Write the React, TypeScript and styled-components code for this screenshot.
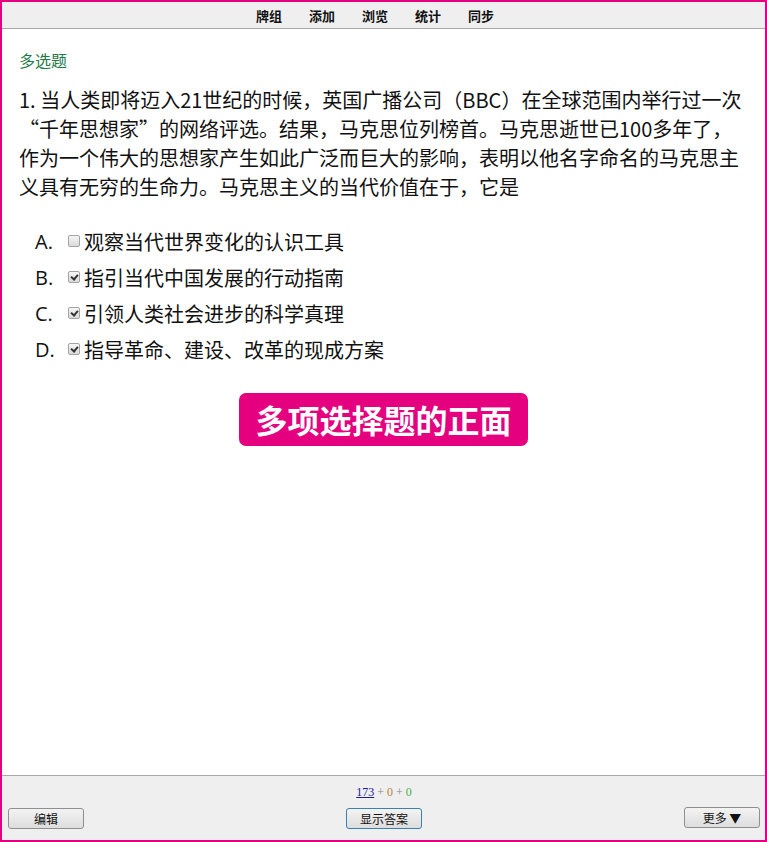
import React from "react";
import styled, { createGlobalStyle } from "styled-components";

const GlobalStyle = createGlobalStyle`
  html, body {
    margin: 0;
    padding: 0;
    background: #ffffff;
  }
  * {
    box-sizing: border-box;
  }
`;

const Frame = styled.div`
  height: 842px;
  border: 2px solid #e4007f;
  display: flex;
  flex-direction: column;
  font-family: "Noto Sans CJK SC", "Noto Sans", sans-serif;
  color: #000;
`;

const TopBar = styled.nav`
  height: 27px;
  background: #efefef;
  border-bottom: 1px solid #a8a8a8;
  display: flex;
  justify-content: center;
  align-items: center;
  gap: 27px;
  padding-right: 17px;
`;

const TopLink = styled.a`
  font-size: 13px;
  font-weight: bold;
  color: #111;
  text-decoration: none;
  cursor: pointer;
`;

const Content = styled.main`
  flex: 1;
  padding: 20px 4px 0 17px;
`;

const NoteType = styled.a`
  display: block;
  font-size: 16px;
  line-height: 22px;
  color: #1e7a4a;
  text-decoration: none;
`;

const Question = styled.p`
  margin: 14px 0 0 0;
  font-size: 20px;
  line-height: 29px;
  color: #111;
`;

const Options = styled.ol`
  list-style: none;
  margin: 22px 0 0 0;
  padding: 0 0 0 16px;
`;

const OptionRow = styled.li`
  height: 36px;
  display: flex;
  align-items: center;
  font-size: 20px;
  color: #111;
`;

const Letter = styled.span`
  width: 33px;
  font-family: "Open Sans", "Noto Sans", sans-serif;
`;

const Box = styled.input`
  appearance: none;
  -webkit-appearance: none;
  width: 12px;
  height: 12px;
  margin: 0 4px 0 0;
  border: 1px solid #a3a3a3;
  border-radius: 2px;
  background: linear-gradient(#f6f6f6, #dadada);
  position: relative;

  &:checked::after {
    content: "";
    position: absolute;
    left: 3px;
    top: 1px;
    width: 3px;
    height: 5px;
    border: solid #333;
    border-width: 0 2px 2px 0;
    transform: rotate(40deg);
  }
`;

const Caption = styled.div`
  display: flex;
  justify-content: center;
  margin-top: 26px;
  padding-right: 13px;
`;

const CaptionBadge = styled.span`
  display: inline-block;
  background: #e4007f;
  color: #fff;
  font-size: 32px;
  font-weight: bold;
  line-height: 53px;
  padding: 0 16px;
  border-radius: 7px;
`;

const BottomBar = styled.footer`
  height: 65px;
  background: #efefef;
  border-top: 1px solid #a8a8a8;
  display: grid;
  grid-template-columns: 1fr auto 1fr;
  grid-template-rows: 22px 22px;
  padding: 5px 5px 0 6px;
  row-gap: 3px;
  align-items: center;
`;

const Stats = styled.div`
  grid-column: 2;
  grid-row: 1;
  text-align: center;
  font-family: "Liberation Serif", serif;
  font-size: 12px;
  color: #888;
`;

const StatNum = styled.span<{ $tone: "due" | "learn" | "new" }>`
  color: ${(p) =>
    p.$tone === "due" ? "#1a1a9a" : p.$tone === "learn" ? "#c0803a" : "#4caf4c"};
  text-decoration: ${(p) => (p.$tone === "due" ? "underline" : "none")};
`;

const Button = styled.button<{ $focus?: boolean }>`
  width: 76px;
  height: 21px;
  padding: 0;
  font-family: "Noto Sans CJK SC", sans-serif;
  font-size: 12px;
  color: #111;
  border: 1px solid ${(p) => (p.$focus ? "#3c7fb1" : "#8f8f8f")};
  border-radius: 3px;
  background: linear-gradient(#f3f3f3, #dddddd);
  cursor: pointer;
`;

const LeftCell = styled.div`
  grid-column: 1;
  grid-row: 2;
`;

const CenterCell = styled.div`
  grid-column: 2;
  grid-row: 2;
`;

const RightCell = styled.div`
  grid-column: 3;
  grid-row: 2;
  display: flex;
  justify-content: flex-end;
`;

const questionLines = [
  "1. 当人类即将迈入21世纪的时候，英国广播公司（BBC）在全球范围内举行过一次",
  "“千年思想家”的网络评选。结果，马克思位列榜首。马克思逝世已100多年了，",
  "作为一个伟大的思想家产生如此广泛而巨大的影响，表明以他名字命名的马克思主",
  "义具有无穷的生命力。马克思主义的当代价值在于，它是",
];

const options = [
  { letter: "A.", text: "观察当代世界变化的认识工具", checked: false },
  { letter: "B.", text: "指引当代中国发展的行动指南", checked: true },
  { letter: "C.", text: "引领人类社会进步的科学真理", checked: true },
  { letter: "D.", text: "指导革命、建设、改革的现成方案", checked: true },
];

export default function App() {
  return (
    <>
      <GlobalStyle />
      <Frame>
        <TopBar>
          <TopLink>牌组</TopLink>
          <TopLink>添加</TopLink>
          <TopLink>浏览</TopLink>
          <TopLink>统计</TopLink>
          <TopLink>同步</TopLink>
        </TopBar>
        <Content>
          <NoteType>多选题</NoteType>
          <Question>
            {questionLines.map((line, i) => (
              <React.Fragment key={i}>
                {line}
                {i < questionLines.length - 1 && <br />}
              </React.Fragment>
            ))}
          </Question>
          <Options>
            {options.map((o) => (
              <OptionRow key={o.letter}>
                <Letter>{o.letter}</Letter>
                <Box type="checkbox" defaultChecked={o.checked} />
                <span>{o.text}</span>
              </OptionRow>
            ))}
          </Options>
          <Caption>
            <CaptionBadge>多项选择题的正面</CaptionBadge>
          </Caption>
        </Content>
        <BottomBar>
          <Stats>
            <StatNum $tone="due">173</StatNum> + <StatNum $tone="learn">0</StatNum> +{" "}
            <StatNum $tone="new">0</StatNum>
          </Stats>
          <LeftCell>
            <Button>编辑</Button>
          </LeftCell>
          <CenterCell>
            <Button $focus>显示答案</Button>
          </CenterCell>
          <RightCell>
            <Button>更多 ▼</Button>
          </RightCell>
        </BottomBar>
      </Frame>
    </>
  );
}
